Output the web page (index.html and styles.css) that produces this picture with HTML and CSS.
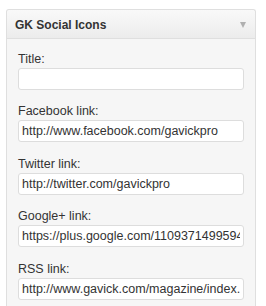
FILE: index.html
```html
<!DOCTYPE html>
<html>
<head>
<meta charset="utf-8">
<link rel="stylesheet" href="styles.css">
</head>
<body>
<div class="page">
  <div class="widget">
    <div class="widget-head">
      <span class="widget-title">GK Social Icons</span>
      <span class="arrow"></span>
    </div>
    <div class="widget-body">
      <div class="field">
        <label class="lbl">Title:</label>
        <input class="inp" type="text" value="">
      </div>
      <div class="field">
        <label class="lbl">Facebook link:</label>
        <input class="inp" type="text" value="http://www.facebook.com/gavickpro">
      </div>
      <div class="field">
        <label class="lbl">Twitter link:</label>
        <input class="inp" type="text" value="http://twitter.com/gavickpro">
      </div>
      <div class="field">
        <label class="lbl">Google+ link:</label>
        <input class="inp" type="text" value="https://plus.google.com/110937149959409474227">
      </div>
      <div class="field">
        <label class="lbl">RSS link:</label>
        <input class="inp" type="text" value="http://www.gavick.com/magazine/index.php">
      </div>
    </div>
  </div>
</div>
</body>
</html>
```
FILE: styles.css
```css
html, body {
  margin: 0;
  padding: 0;
  background: #ffffff;
  overflow: hidden;
}
.page {
  padding: 9px 10px 0 6px;
  height: 306px;
  box-sizing: border-box;
  overflow: hidden;
}
.widget {
  width: 250px;
  box-sizing: border-box;
  border: 1px solid #dfdfdf;
  border-bottom: none;
  border-radius: 3px 3px 0 0;
  background: #f6f6f6;
  height: 297px;
  font-family: "Liberation Sans", Arial, sans-serif;
  color: #333;
}
.widget-head {
  height: 28px;
  border-bottom: 1px solid #dfdfdf;
  background: linear-gradient(#f9f9f9, #ececec);
  border-radius: 3px 3px 0 0;
  display: flex;
  align-items: center;
  justify-content: space-between;
  padding: 0 8px 0 8px;
}
.widget-title {
  font-weight: bold;
  font-size: 12px;
  color: #333;
  line-height: 16px;
  padding-top: 1px;
}
.arrow {
  width: 0;
  height: 0;
  border-left: 3.5px solid transparent;
  border-right: 3.5px solid transparent;
  border-top: 6px solid #b0b0b0;
  margin-top: 2px;
  margin-right: 1px;
}
.widget-body {
  padding: 12px 11px 0 11px;
  display: flex;
  flex-direction: column;
  gap: 13.4px;
}
.field {
  display: flex;
  flex-direction: column;
}
.lbl {
  font-size: 12.5px;
  line-height: 16px;
  margin-bottom: 1px;
  color: #333;
}
.inp {
  height: 22px;
  box-sizing: border-box;
  width: 100%;
  margin: 0;
  border: 1px solid #dddddd;
  border-radius: 3px;
  background: #fff;
  padding: 0 3px;
  font-family: "Liberation Sans", Arial, sans-serif;
  font-size: 12.5px;
  color: #333;
  outline: none;
}
```
